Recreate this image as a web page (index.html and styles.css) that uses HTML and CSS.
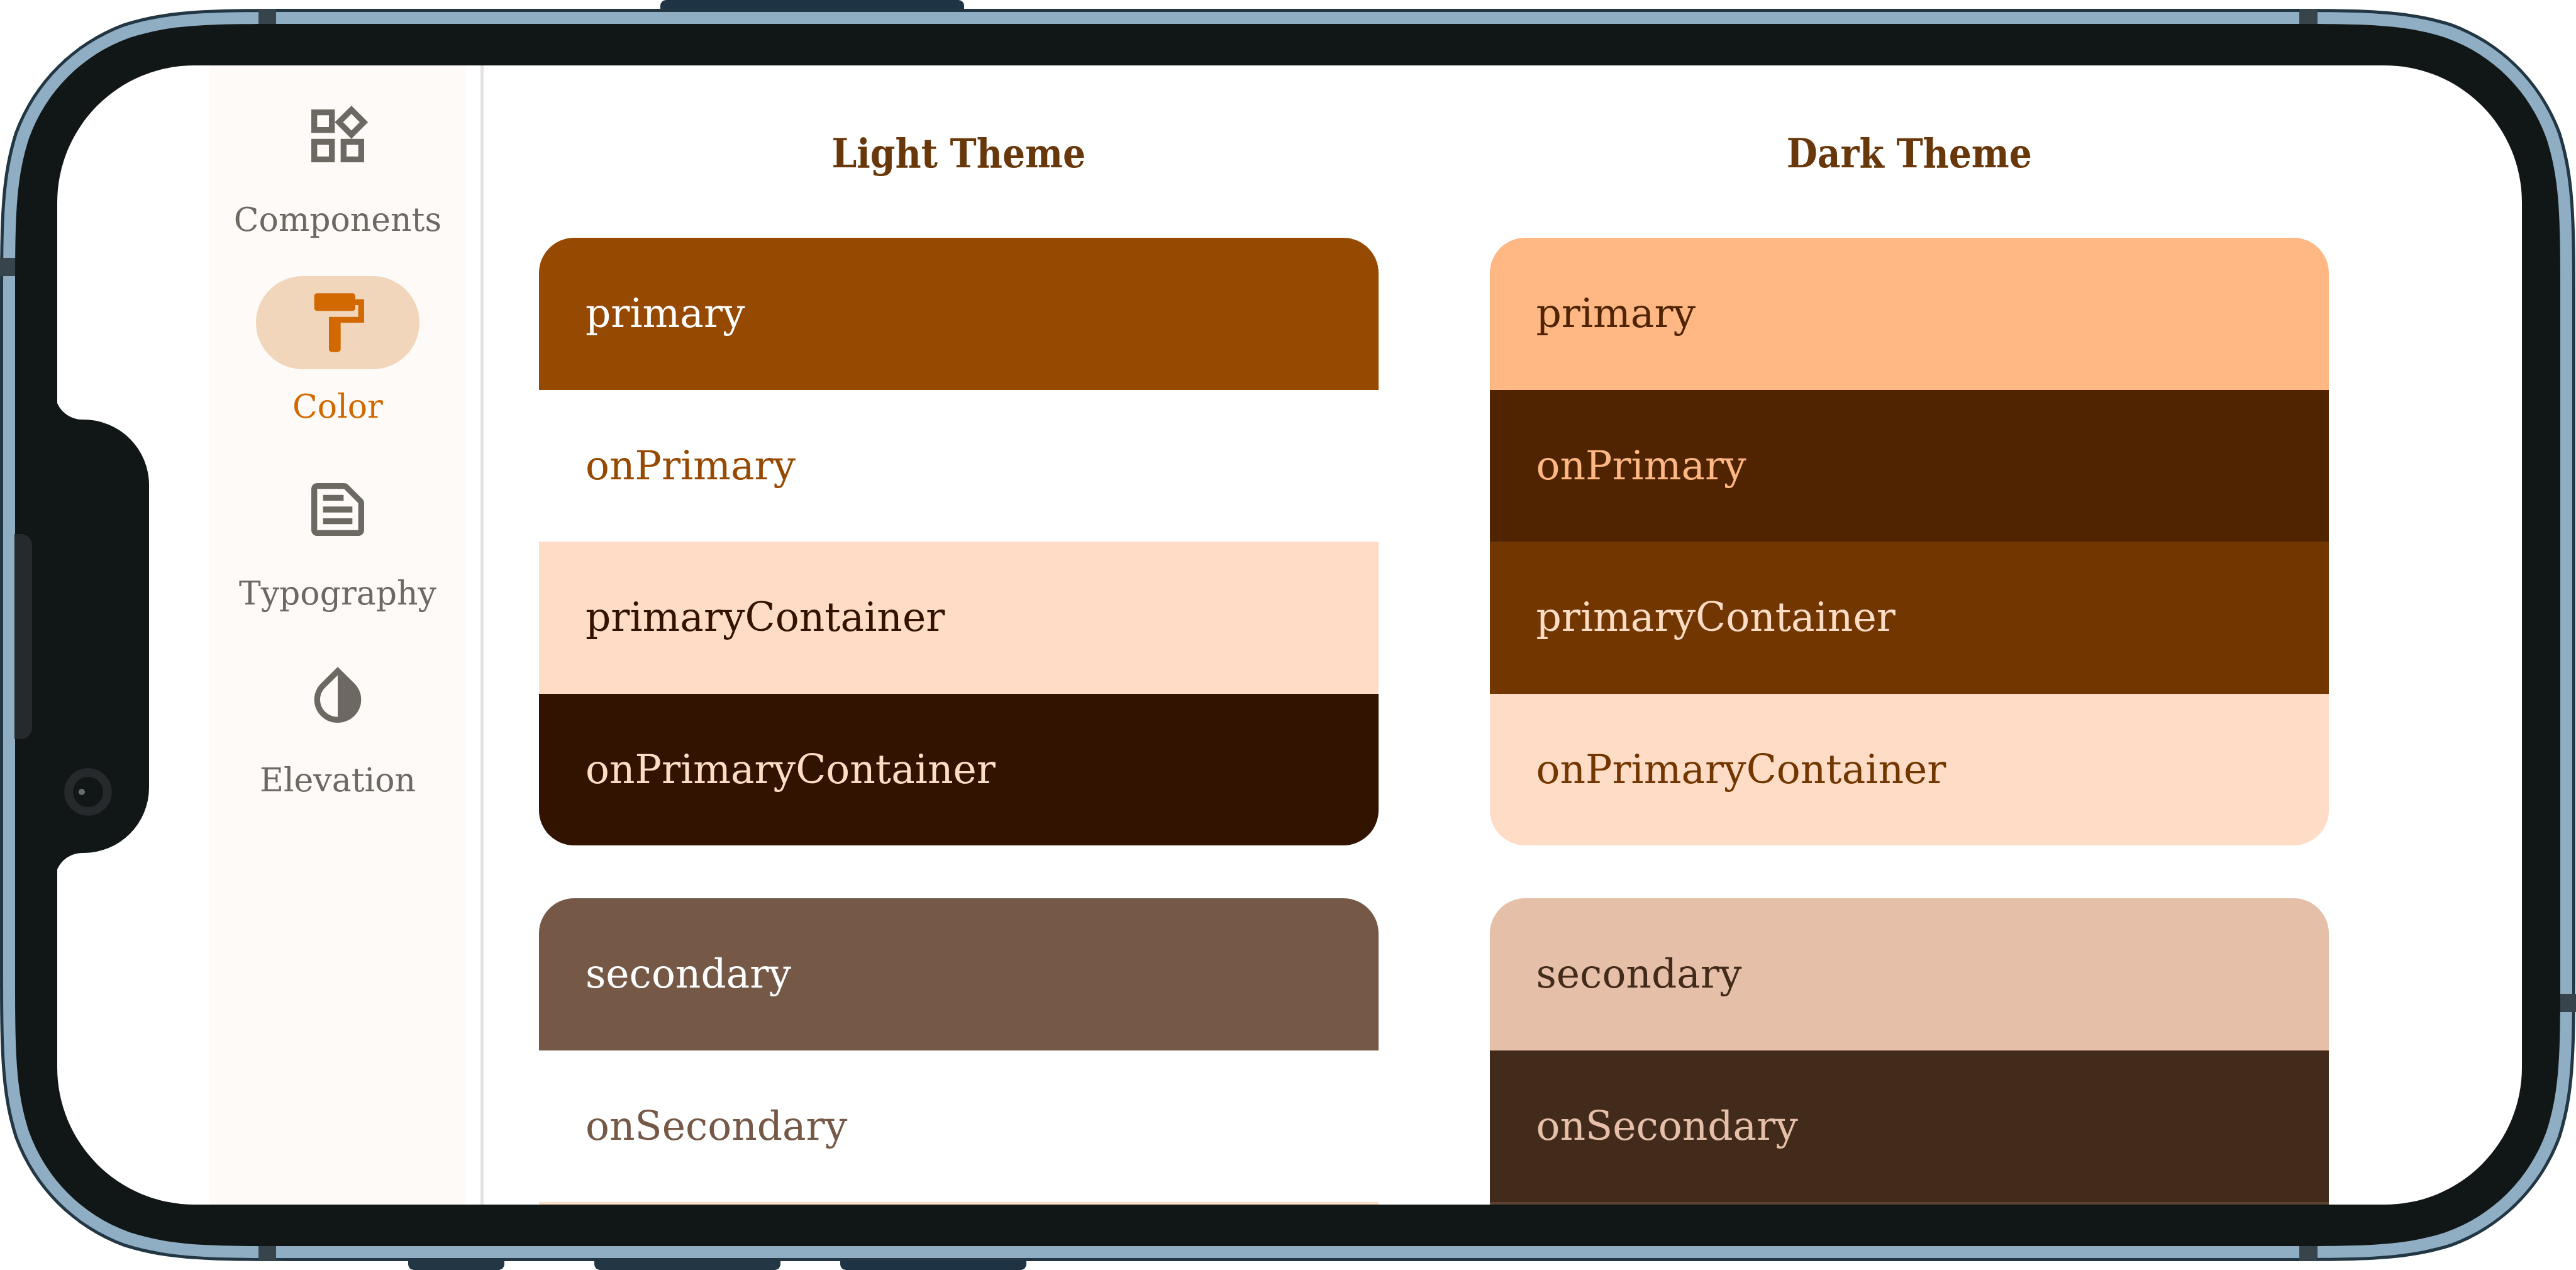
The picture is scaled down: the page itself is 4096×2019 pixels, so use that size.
FILE: index.html
```html
<!DOCTYPE html>
<html lang="en">
<head>
<meta charset="utf-8">
<meta name="viewport" content="width=device-width, initial-scale=1">
<title>Color</title>
<link rel="stylesheet" href="styles.css">
</head>
<body>
<div class="device">
  <svg class="device-body" viewBox="0 0 4096 2019" preserveAspectRatio="none" aria-hidden="true">
    <g fill="#223644">
      <path fill="#1e3344" d="M1050 16V9a9 9 0 0 1 9-9h465a9 9 0 0 1 9 9v7z"/>
      <path d="M649 2003v7a9 9 0 0 0 9 9h135a9 9 0 0 0 9-9v-7z"/>
      <path d="M945 2003v7a9 9 0 0 0 9 9h278a9 9 0 0 0 9-9v-7z"/>
      <path fill="#1e3344" d="M1336 2003v7a9 9 0 0 0 9 9h278a9 9 0 0 0 9-9v-7z"/>
    </g>
    <path fill="#223644" d="M476 14H3619C3756 14 3825 14 3898 37C3979 67 4042 130 4072 211C4095 284 4095 353 4095 490V1529C4095 1666 4095 1735 4072 1808C4042 1889 3979 1952 3898 1982C3825 2005 3756 2005 3619 2005H476C339 2005 270 2005 197 1982C116 1952 53 1889 23 1808C0 1735 0 1666 0 1529V490C0 353 0 284 23 211C53 130 116 67 197 37C270 14 339 14 476 14Z"/>
    <path fill="#8faec3" d="M473 19H3622C3756 19 3823 19 3897 42C3976 71 4038 133 4067 212C4090 286 4090 353 4090 487V1532C4090 1666 4090 1733 4067 1807C4038 1886 3976 1948 3897 1977C3823 2000 3756 2000 3622 2000H473C339 2000 272 2000 198 1977C119 1948 57 1886 28 1807C5 1733 5 1666 5 1532V487C5 353 5 286 28 212C57 133 119 71 198 42C272 19 339 19 473 19Z"/>
    <g fill="#37444b">
      <path d="M411 14h28v26h-28zM3656 14h29v26h-29zM411 1979h28v26h-28zM3656 1979h29v26h-29zM0 410h26v29H0zM4069 1580h27v29h-27z"/>
    </g>
    <path fill="#111616" d="M464 38H3631C3758 38 3821 38 3889 60C3964 87 4022 145 4049 220C4071 288 4071 351 4071 478V1541C4071 1668 4071 1731 4049 1799C4022 1874 3964 1932 3889 1959C3821 1981 3758 1981 3631 1981H464C337 1981 274 1981 206 1959C131 1932 73 1874 46 1799C24 1731 24 1668 24 1541V478C24 351 24 288 46 220C73 145 131 87 206 60C274 38 337 38 464 38Z"/>
  </svg>

  <div class="screen">
    <nav class="rail" aria-label="Sections">
      <a class="rail-item" href="#components">
        <span class="indicator"><svg class="icon" viewBox="0 0 24 24" aria-hidden="true"><path d="M16.66 4.52l2.83 2.83-2.83 2.83-2.83-2.83 2.83-2.83M9 5v4H5V5h4m10 10v4h-4v-4h4M9 15v4H5v-4h4m7.66-13.31L11 7.34 16.66 13l5.66-5.66-5.66-5.65zM11 3H3v8h8V3zm10 10h-8v8h8v-8zm-10 0H3v8h8v-8z"/></svg></span>
        <span class="rail-label">Components</span>
      </a>
      <a class="rail-item selected" href="#color" aria-current="page">
        <span class="indicator"><svg class="icon" viewBox="0 0 24 24" aria-hidden="true"><path d="M18 4V3c0-.55-.45-1-1-1H5c-.55 0-1 .45-1 1v4c0 .55.45 1 1 1h12c.55 0 1-.45 1-1V6h1v4H9v11c0 .55.45 1 1 1h2c.55 0 1-.45 1-1v-9h8V4h-3z"/></svg></span>
        <span class="rail-label">Color</span>
      </a>
      <a class="rail-item" href="#typography">
        <span class="indicator"><svg class="icon" viewBox="0 0 24 24" aria-hidden="true"><path d="M7 15h10v2H7zm0-4h10v2H7zm0-4h7v2H7z"/><path d="M20.41 8.41l-4.83-4.83c-.37-.37-.88-.58-1.41-.58H5c-1.1 0-2 .9-2 2v14c0 1.1.9 2 2 2h14c1.1 0 2-.9 2-2V9.83c0-.53-.21-1.04-.59-1.42zM19 19H5V5h9.17L19 9.83V19z"/></svg></span>
        <span class="rail-label">Typography</span>
      </a>
      <a class="rail-item" href="#elevation">
        <span class="indicator"><svg class="icon" viewBox="0 0 24 24" aria-hidden="true"><path d="M12 4.81V19c-3.31 0-6-2.63-6-5.87 0-1.56.62-3.03 1.75-4.14L12 4.81M6.35 7.56C4.9 8.99 4 10.96 4 13.13 4 17.48 7.58 21 12 21s8-3.52 8-7.87c0-2.17-.9-4.14-2.35-5.57L12 2 6.35 7.56z"/></svg></span>
        <span class="rail-label">Elevation</span>
      </a>
    </nav>

    <main class="themes" id="color">
      <section class="theme">
        <h2 class="theme-title">Light Theme</h2>
        <ul class="swatches">
          <li class="swatch light-primary">primary</li>
          <li class="swatch light-on-primary">onPrimary</li>
          <li class="swatch light-primary-container">primaryContainer</li>
          <li class="swatch light-on-primary-container">onPrimaryContainer</li>
        </ul>
        <ul class="swatches">
          <li class="swatch light-secondary">secondary</li>
          <li class="swatch light-on-secondary">onSecondary</li>
          <li class="swatch light-secondary-container"></li>
        </ul>
      </section>
      <section class="theme">
        <h2 class="theme-title">Dark Theme</h2>
        <ul class="swatches">
          <li class="swatch dark-primary">primary</li>
          <li class="swatch dark-on-primary">onPrimary</li>
          <li class="swatch dark-primary-container">primaryContainer</li>
          <li class="swatch dark-on-primary-container">onPrimaryContainer</li>
        </ul>
        <ul class="swatches">
          <li class="swatch dark-secondary">secondary</li>
          <li class="swatch dark-on-secondary">onSecondary</li>
          <li class="swatch dark-secondary-container"></li>
        </ul>
      </section>
    </main>
  </div>

  <svg class="device-notch" viewBox="0 0 4096 2019" preserveAspectRatio="none" aria-hidden="true">
    <path fill="#111616" d="M88 641H91A44 44 0 0 0 131 667H133A104 104 0 0 1 237 771V1252A104 104 0 0 1 133 1356H131A44 44 0 0 0 91 1382H88Z"/>
    <path fill="#262a2d" d="M23 849H33A18 18 0 0 1 51 867V1157A18 18 0 0 1 33 1175H23Z"/>
    <circle cx="140" cy="1259" r="38" fill="#262a2d"/>
    <circle cx="140" cy="1259" r="24" fill="#111616"/>
    <circle cx="130" cy="1259" r="5" fill="#636d72"/>
  </svg>
</div>
</body>
</html>
```

FILE: styles.css
```css
* {
  box-sizing: border-box;
}

body {
  margin: 0;
  background: #fff;
  font-family: "Roboto Slab", "DejaVu Serif", serif;
}

/* Phone */
.device {
  position: relative;
  display: flex;
  height: 100vh;
  padding: 104px 86px 104px 91px;
  overflow: hidden;
}

.device-body,
.device-notch {
  position: absolute;
  inset: 0;
  width: 100%;
  height: 100%;
  pointer-events: none;
}

.screen {
  position: relative;
  display: flex;
  flex: 1;
  min-width: 0;
  padding: 0 218px 0 242px;
  border-radius: 218px;
  background: #fff;
  overflow: hidden;
}

/* Navigation rail */
.rail {
  display: flex;
  flex: none;
  flex-direction: column;
  gap: 39px;
  width: 408px;
  padding-top: 38px;
  background: #fefaf7;
}

.rail-item {
  display: flex;
  flex-direction: column;
  align-items: center;
  gap: 8px;
  color: #6e6863;
  text-decoration: none;
}

.indicator {
  display: flex;
  align-items: center;
  justify-content: center;
  width: 260px;
  height: 148px;
  border-radius: 74px;
}

.icon {
  width: 112px;
  height: 112px;
  fill: currentColor;
}

.rail-label {
  font-size: 52px;
  line-height: 102px;
}

.selected {
  color: #d26900;
}

.selected .indicator {
  background: #f2d6bb;
}

/* Colour schemes */
.themes {
  display: grid;
  flex: 1;
  grid-template-columns: 1fr 1fr;
  min-width: 0;
  margin-left: 23px;
  border-left: 5px solid #e3e3e3;
}

.theme {
  display: flex;
  flex-direction: column;
  gap: 84px;
  padding: 98px 89px 84px 88px;
}

.theme-title {
  margin: 0 0 8px;
  color: #68380b;
  font-family: "Roboto Slab", "DejaVu Serif Condensed", "DejaVu Serif", serif;
  font-size: 63px;
  font-weight: 700;
  line-height: 84px;
  text-align: center;
}

.swatches {
  display: grid;
  flex: none;
  grid-template-rows: repeat(4, 1fr);
  min-height: 966px;
  margin: 0;
  padding: 0;
  border-radius: 56px;
  list-style: none;
  overflow: hidden;
}

.swatch {
  display: flex;
  align-items: center;
  padding: 0 74px;
  font-size: 63px;
}

.light-primary { background: #964900; color: #fff; }
.light-on-primary { background: #fff; color: #964900; }
.light-primary-container { background: #ffdcc6; color: #311300; }
.light-on-primary-container { background: #311300; color: #ffdcc6; }
.light-secondary { background: #755846; color: #fff; }
.light-on-secondary { background: #fff; color: #755846; }
.light-secondary-container { background: #ffdcc6; }

.dark-primary { background: #ffb784; color: #502400; }
.dark-on-primary { background: #502400; color: #ffb784; }
.dark-primary-container { background: #723600; color: #ffdcc6; }
.dark-on-primary-container { background: #ffdcc6; color: #723600; }
.dark-secondary { background: #e5bfa8; color: #422b1b; }
.dark-on-secondary { background: #422b1b; color: #e5bfa8; }
.dark-secondary-container { background: #5b4130; }
```
